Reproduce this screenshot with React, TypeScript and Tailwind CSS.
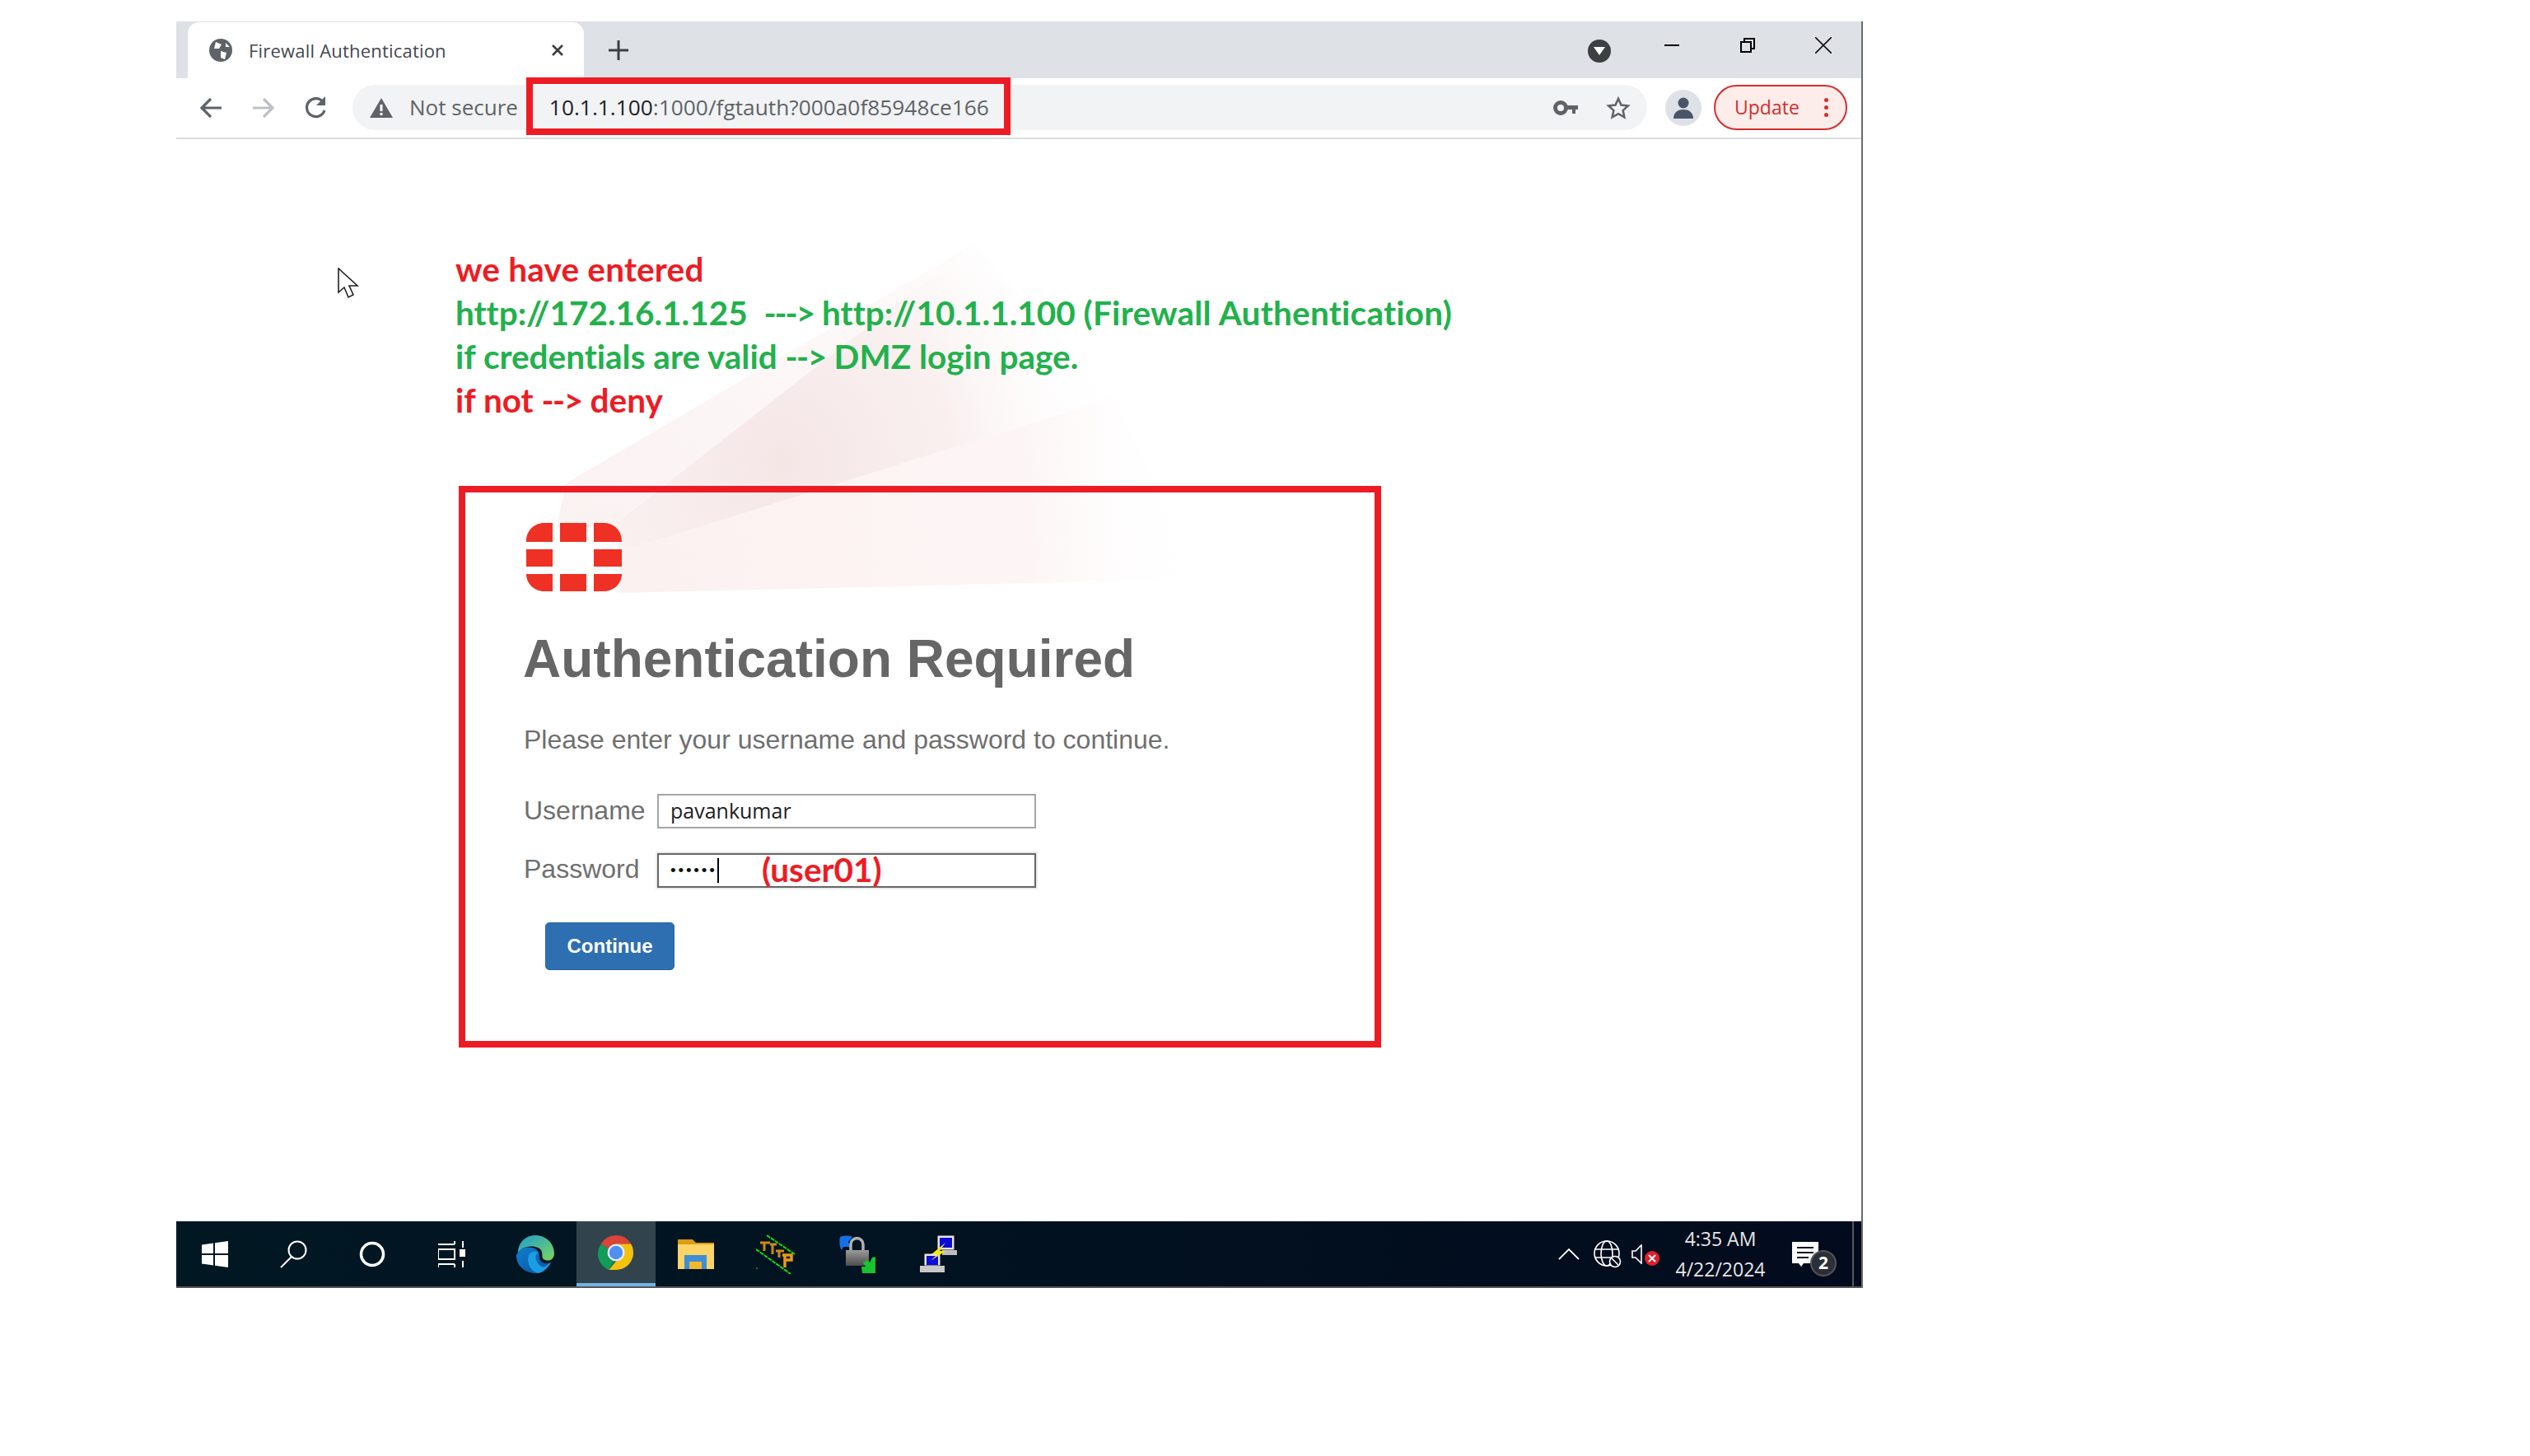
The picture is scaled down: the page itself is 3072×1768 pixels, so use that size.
const taskCells = [
  { w: "w-[94px]", icon: <WinIcon /> },
  { w: "w-[96px]", icon: <SearchIcon /> },
  { w: "w-[95px]", icon: <CortanaIcon /> },
  { w: "w-[100px]", icon: <TaskViewIcon /> },
  { w: "w-[101px]", icon: <EdgeIcon /> },
  { w: "w-[96px]", icon: <ChromeIcon />, active: true },
  { w: "w-[97px]", icon: <FolderIcon /> },
  { w: "w-[98px]", icon: <TcpIcon /> },
  { w: "w-[99px]", icon: <LockIcon /> },
  { w: "w-[100px]", icon: <NetIcon /> },
];

function WinIcon() {
  return (
    <svg width="34" height="34" viewBox="0 0 34 34" fill="#fff">
      <path d="M1 5.500 15 3.500V16H1ZM17 3.200 33 1V16H17ZM1 18H15V30.500L1 28.500ZM17 18H33V33L17 30.800Z" />
    </svg>
  );
}

function SearchIcon() {
  return (
    <svg width="34" height="34" viewBox="0 0 34 34" fill="none" stroke="#fff" strokeWidth="2">
      <circle cx="22" cy="12" r="10.500" />
      <path d="M15 20 2 33" />
    </svg>
  );
}

function CortanaIcon() {
  return (
    <svg width="32" height="32" viewBox="0 0 32 32" fill="none" stroke="#fff" strokeWidth="3.500">
      <circle cx="16" cy="16" r="13.500" />
    </svg>
  );
}

function TaskViewIcon() {
  return (
    <svg width="34" height="32" viewBox="0 0 34 32" fill="none" stroke="#fff" strokeWidth="2">
      <path d="M0 4H20M20 0V4M0 10H20V22H0ZM0 28H20M20 28V32M0 28V32M30 0V8M30 24V32" />
      <rect x="26" y="10" width="7" height="9" fill="#fff" stroke="none" />
    </svg>
  );
}

function EdgeIcon() {
  return (
    <svg width="48" height="48" viewBox="0 0 48 48">
      <defs>
        <linearGradient id="edgeTop" x1="0" y1="0" x2="1" y2="1">
          <stop offset="0" stopColor="#1f9bd1" />
          <stop offset="1" stopColor="#7bd85a" />
        </linearGradient>
        <linearGradient id="edgeLow" x1="0" y1="0" x2="1" y2="1">
          <stop offset="0" stopColor="#0f7fd0" />
          <stop offset="1" stopColor="#0b4f9c" />
        </linearGradient>
      </defs>
      <path d="M24 1C37 1 47 11 47 23C47 30 41 33 36 31C30 29 34 24 31 19C27 13 10 12 3 22C3 10 12 1 24 1Z" fill="url(#edgeTop)" />
      <path d="M3 22C8 13 26 13 29 24C28 30 31 35 38 35L43 34C38 43 31 47 24 47C12 47 1 38 1 26C1 25 2 23 3 22Z" fill="url(#edgeLow)" />
      <path d="M15 30C15 22 22 19 28 22C22 24 24 33 30 38C36 42 38 36 43 34C38 43 31 47 27 47C20 45 15 38 15 30Z" fill="#1b9de2" />
    </svg>
  );
}

function ChromeIcon() {
  return (
    <svg width="46" height="46" viewBox="0 0 48 48">
      <path d="M24 2A22 22 0 0 1 43 13H24A11 11 0 0 0 14 19L5 13A22 22 0 0 1 24 2Z" fill="#db4437" />
      <path d="M5 13 14 19 A11 11 0 0 0 22 35 L15 46 A22 22 0 0 1 5 13Z" fill="#0f9d58" />
      <path d="M43 13A22 22 0 0 1 24 46H15L24 35A11 11 0 0 0 33 19L24 13Z" fill="#f4c20d" />
      <circle cx="24" cy="24" r="11" fill="#e8eef7" />
      <circle cx="24" cy="24" r="8.500" fill="#4f8ff0" />
    </svg>
  );
}

function FolderIcon() {
  return (
    <svg width="44" height="36" viewBox="0 0 44 36">
      <path d="M0 0H18L22 4H44V8H0Z" fill="#dc9b10" />
      <rect x="0" y="6" width="44" height="30" fill="#fcd566" />
      <path d="M8 19H35V36H29V27H14V36H8Z" fill="#3f8fd6" />
      <rect x="14" y="27" width="15" height="9" fill="#f2b92e" />
    </svg>
  );
}

function TcpIcon() {
  return (
    <svg width="48" height="48" viewBox="0 0 48 48" fill="none">
      <path d="M13 1 47 24M0 18 42 48" stroke="#16d816" strokeWidth="2" strokeDasharray="5 1" />
      <path d="M5 10H17M10 10V20M17 12H25M20 12V24M24 20H34M28 20V28" stroke="#c98a18" strokeWidth="3" />
      <path d="M32 25H43V31H36M35 25V40" stroke="#e89a14" strokeWidth="3.500" />
      <rect x="0" y="40" width="2" height="2" fill="#0c7c10" />
    </svg>
  );
}

function LockIcon() {
  return (
    <svg width="46" height="46" viewBox="0 0 46 46">
      <defs>
        <linearGradient id="lockBody" x1="0" y1="0" x2="0" y2="1">
          <stop offset="0" stopColor="#9a9a9a" />
          <stop offset="1" stopColor="#4c4c4c" />
        </linearGradient>
      </defs>
      <path d="M2 2C6 0 13 0 17 2L12 8 15 14H6L4 18C1 14 1 7 2 2Z" fill="#1470e6" />
      <path d="M15 19V11A7 7 0 0 1 30 11V19" fill="none" stroke="#b0b0b0" strokeWidth="3.500" />
      <rect x="9" y="18" width="28" height="19" fill="url(#lockBody)" />
      <path d="M45 26V46H29L28 38 33 38 30 33 36 30 38 33 41 27Z" fill="#19c22e" />
    </svg>
  );
}

function NetIcon() {
  return (
    <svg width="46" height="46" viewBox="0 0 46 46">
      <rect x="21" y="0" width="21" height="18" fill="#e4e4e4" stroke="#111" />
      <rect x="24" y="3" width="15" height="12" fill="#0c0cd8" />
      <rect x="27" y="18" width="18" height="6" fill="#bdbdbd" />
      <rect x="5" y="22" width="20" height="15" fill="#e4e4e4" stroke="#111" />
      <rect x="8" y="25" width="14" height="11" fill="#0c0cd8" />
      <rect x="0" y="37" width="30" height="8" fill="#c8c8c8" />
      <path d="M31 9 14 23H21L13 31 31 19H24Z" fill="#f5e616" />
    </svg>
  );
}

function FortiLogo() {
  return (
    <svg width="116" height="83" viewBox="0 0 116 83" fill="#ee3124">
      <path d="M32 0V23H0V22C0 10 9 0 22 0ZM41 0H73V23H41ZM82 0H94C107 0 116 10 116 22V23H82ZM0 32H32V53H0ZM82 32H116V53H82ZM0 62H32V83H22C9 83 0 73 0 62ZM41 62H73V83H41ZM82 62H116C116 73 107 83 94 83H82Z" />
    </svg>
  );
}

// faint pink rays behind the login box
function Fan() {
  return (
    <svg className="absolute inset-0 pointer-events-none" width="2048" height="1314" viewBox="214 169 2048 1314">
      <defs>
        <linearGradient id="fanFaint" gradientUnits="userSpaceOnUse" x1="700" y1="620" x2="1170" y2="300">
          <stop offset="0" stopColor="#fbf2f2" />
          <stop offset="1" stopColor="#fefbfb" />
        </linearGradient>
        <radialGradient id="fanMid" gradientUnits="userSpaceOnUse" cx="950" cy="560" r="420">
          <stop offset="0" stopColor="#f5e6e6" />
          <stop offset="0.5" stopColor="#faf0f0" />
          <stop offset="1" stopColor="#ffffff" stopOpacity="0" />
        </radialGradient>
        <linearGradient id="fanLow" gradientUnits="userSpaceOnUse" x1="760" y1="700" x2="1460" y2="640">
          <stop offset="0" stopColor="#fcf1f1" />
          <stop offset="0.7" stopColor="#fdf5f5" />
          <stop offset="1" stopColor="#ffffff" stopOpacity="0" />
        </linearGradient>
      </defs>
      <path d="M1181 297 687 587 676 640 742 640Z" fill="url(#fanFaint)" />
      <path d="M742 640 1181 297 1351 483 753 670Z" fill="url(#fanMid)" />
      <path d="M753 670 1351 483 1460 703 753 720Z" fill="url(#fanLow)" />
    </svg>
  );
}

export default function App() {
  return (
    <div className="min-h-[1768px] bg-white pt-[26px] pl-[214px] font-['Liberation_Sans',sans-serif]">
      <div className="w-[2048px] h-[1538px] flex flex-col border-r-2 border-[#6b6b6b]">
        {/* tab strip */}
        <div className="h-[69px] bg-[#dee1e6] flex items-center pl-[14px] shrink-0">
          <div className="w-[481px] h-full mt-px bg-white rounded-t-[14px] flex items-center pl-[26px] pr-[24px] font-['Open_Sans',sans-serif] text-[22px] text-[#45494e]">
            <svg width="28" height="28" viewBox="0 0 28 28" className="mr-[20px]">
              <circle cx="14" cy="14" r="14" fill="#5f6368" />
              <path d="M8 4 15 7 12 12 6 12ZM14 15 21 17 19 25 14 23Z M20 5 25 10 20 10Z" fill="#fff" />
            </svg>
            <span className="tracking-[0.2px]">Firewall Authentication</span>
            <svg className="ml-auto" width="16" height="16" viewBox="0 0 16 16" stroke="#3c4043" strokeWidth="2.600">
              <path d="M2 2 14 14M14 2 2 14" />
            </svg>
          </div>
          <svg className="ml-[30px]" width="24" height="24" viewBox="0 0 24 24" stroke="#3c4043" strokeWidth="3">
            <path d="M12 0V24M0 12H24" />
          </svg>
          <div className="ml-auto w-[28px] h-[28px] mt-[2px] rounded-full bg-[#3c4043] flex items-center justify-center">
            <div className="w-0 h-0 border-x-[7px] border-x-transparent border-t-[10px] border-t-white" />
          </div>
          <div className="w-[18px] h-[2px] bg-black ml-[65px] mb-[12px]" />
          <svg className="ml-[74px] mb-[12px]" width="18" height="18" viewBox="0 0 18 18" fill="none" stroke="#000" strokeWidth="2">
            <path d="M1 5H13V17H1ZM5 5V1H17V13H13" />
          </svg>
          <svg className="ml-[73px] mb-[12px] mr-[36px]" width="20" height="20" viewBox="0 0 20 20" stroke="#111" strokeWidth="1.600">
            <path d="M0 0 20 20M20 0 0 20" />
          </svg>
        </div>

        {/* toolbar */}
        <div className="h-[74px] shrink-0 flex items-start pt-[8px] border-b-2 border-[#dadce0] bg-white">
          <div className="w-[214px] h-[55px] flex items-center pl-[28px] gap-[36px]">
            <svg width="28" height="26" viewBox="0 0 28 26" fill="none" stroke="#5f6368" strokeWidth="3.200">
              <path d="M27 13H3M14 2 3 13 14 24" />
            </svg>
            <svg width="28" height="26" viewBox="0 0 28 26" fill="none" stroke="#bdc1c6" strokeWidth="3.200">
              <path d="M1 13H25M14 2 25 13 14 24" />
            </svg>
            <svg width="26" height="28" viewBox="0 0 26 28" fill="none" stroke="#5f6368" strokeWidth="3.200">
              <path d="M23 8A11 11 0 1 0 24 17" />
              <path d="M25 0V11H14Z" fill="#5f6368" stroke="none" />
            </svg>
          </div>
          <div className="w-[1572px] h-[55px] rounded-full bg-[#f1f3f4] flex items-center pl-[21px] pr-[20px] font-['Open_Sans',sans-serif] relative">
            <svg width="28" height="24" viewBox="0 0 28 24">
              <path d="M14 0 28 24H0Z" fill="#5f6368" />
              <rect x="12.500" y="8" width="3" height="8" fill="#fff" />
              <rect x="12.500" y="18" width="3" height="3" fill="#fff" />
            </svg>
            <span className="ml-[20px] text-[26px] text-[#5f6368]">Not secure</span>
            <span className="ml-[38px] text-[26.300px] text-[#5f6368]">
              <span className="text-[#202124]">10.1.1.100</span>:1000/fgtauth?000a0f85948ce166
            </span>
            <svg className="ml-auto" width="30" height="18" viewBox="0 0 30 18" fill="#5f6368">
              <path d="M9 0A9 9 0 1 1 9 18A9 9 0 0 1 9 0ZM9 5A4 4 0 1 0 9 13A4 4 0 0 0 9 5ZM16 6H30V11H27V16H23V11H16Z" />
            </svg>
            <svg className="ml-[34px]" width="30" height="30" viewBox="0 0 24 24" fill="none" stroke="#5f6368" strokeWidth="2">
              <path d="M12 3 14.800 9.200 21.500 10 16.500 14.500 17.900 21 12 17.700 6.100 21 7.500 14.500 2.500 10 9.200 9.200Z" />
            </svg>
            {/* red annotation box round the address */}
            <div className="absolute left-[211px] top-[-9px] w-[588px] h-[70px] border-[8px] border-[#ed1c24]" />
          </div>
          <div className="ml-[22px] mt-[6px] w-[44px] h-[44px] rounded-full bg-[#dee1e6] flex items-center justify-center">
            <svg width="24" height="26" viewBox="0 0 24 26" fill="#4a5568">
              <circle cx="12" cy="7" r="6.500" />
              <path d="M0 26C0 18 6 15 12 15S24 18 24 26Z" />
            </svg>
          </div>
          <div className="ml-[15px] w-[162px] h-[55px] rounded-full border-2 border-[#d32f2f] bg-[#fcecea] flex items-center pl-[23px] font-['Open_Sans',sans-serif] text-[23px] text-[#d32f2f]">
            <span>Update</span>
            <div className="ml-[30px] flex flex-col gap-[4px]">
              <div className="w-[5px] h-[5px] rounded-full bg-[#d32f2f]" />
              <div className="w-[5px] h-[5px] rounded-full bg-[#d32f2f]" />
              <div className="w-[5px] h-[5px] rounded-full bg-[#d32f2f]" />
            </div>
          </div>
        </div>

        {/* page */}
        <div className="relative flex-1 bg-white">
          <Fan />
          <svg className="absolute left-[196px] top-[156px]" width="26" height="38" viewBox="0 0 26 38" fill="#fff" stroke="#222" strokeWidth="1.600">
            <path d="M1 1V30L8 24 13 36 19 33 14 22H24Z" />
          </svg>

          <div className="relative pt-[131px] pl-[339px] font-['Lato',sans-serif] font-bold text-[40.500px] leading-[53px] text-[#22b14c] [font-variant-ligatures:none]">
            <p className="text-[#ed1c24] tracking-[0.2px]">we have entered</p>
            <p className="whitespace-pre">
              http://172.16.1.125  <span className="tracking-[-2px]">---&gt;</span> http://10.1.1.100 <span className="tracking-[0.25px]">(Firewall Authentication)</span>
            </p>
            <p>if credentials are valid <span className="tracking-[-1.500px]">--&gt;</span> DMZ login page.</p>
            <p className="text-[#ed1c24]">if not <span className="tracking-[-1.500px]">--&gt;</span> deny</p>
          </div>

          <div className="relative ml-[343px] mt-[78px] w-[1120px] h-[682px] border-[8px] border-[#ed1c24] pt-[37px] pl-[74px] text-[#666]">
            <FortiLogo />
            <h1 className="-ml-[4px] mt-[44px] text-[64px] leading-[76px] font-bold whitespace-nowrap">Authentication Required</h1>
            <p className="-ml-[3px] mt-[40px] text-[32px] leading-[40px] text-[#6f6f6f] whitespace-nowrap">Please enter your username and password to continue.</p>
            <div className="mt-[46px] -ml-[3px] flex items-center h-[42px]">
              <span className="w-[162px] mb-[3px] text-[32px] text-[#6f6f6f]">Username</span>
              <div className="w-[460px] h-[42px] border-2 border-[#a6a6a6] flex items-center pl-[14px] font-['Open_Sans',sans-serif] text-[25px] text-[#202124]">pavankumar</div>
            </div>
            <div className="mt-[30px] -ml-[3px] flex items-center h-[42px]">
              <span className="w-[162px] mb-[4px] text-[32px] text-[#6f6f6f]">Password</span>
              <div className="relative w-[460px] h-[42px] border-2 border-[#666] shadow-[0_0_0_2px_#ececec] flex items-center pl-[14px] text-[#111]">
                <span className="text-[19px] tracking-[2.800px]">••••••</span>
                <div className="w-[2px] h-[30px] bg-black" />
                <span className="absolute left-[125px] top-[-7px] font-['Lato',sans-serif] font-bold text-[40.500px] leading-[50px] text-[#ed1c24] [font-variant-ligatures:none]">(user01)</span>
              </div>
            </div>
            <button className="block mt-[42px] ml-[23px] w-[157px] h-[58px] rounded-[5px] bg-[#2e6fb1] border border-[#2a64a5] text-white text-[24px] font-bold">Continue</button>
          </div>
        </div>

        {/* taskbar */}
        <div className="h-[81px] shrink-0 flex bg-gradient-to-r from-[#011823] to-[#020b1d] text-white border-b-2 border-[#555]">
          {taskCells.map((c, i) => (
            <div key={i} className={`${c.w} flex items-center justify-center ${c.active ? "bg-[#31444e] border-b-4 border-[#6fb2e8]" : ""}`}>
              {c.icon}
            </div>
          ))}
          <div className="ml-auto flex items-center pr-[9px] font-['Open_Sans',sans-serif]">
            <div className="w-[48px] flex justify-center">
              <svg width="26" height="14" viewBox="0 0 26 14" fill="none" stroke="#fff" strokeWidth="1.800">
                <path d="M1 13 13 1 25 13" />
              </svg>
            </div>
            <div className="w-[46px] flex justify-center relative">
              <svg width="34" height="34" viewBox="0 0 34 34" fill="none" stroke="#fff" strokeWidth="1.600">
                <circle cx="16" cy="16" r="15" />
                <ellipse cx="16" cy="16" rx="7" ry="15" />
                <path d="M1 11H31M1 21H31" />
                <circle cx="26" cy="26" r="6.500" fill="#071020" />
                <path d="M22 22 30 30" />
              </svg>
            </div>
            <div className="w-[48px] pl-[6px] flex items-center relative h-[40px]">
              <svg width="14" height="24" viewBox="0 0 14 24" fill="none" stroke="#fff" strokeWidth="1.600">
                <path d="M12 1V23L5 16H1V8H5Z" />
              </svg>
              <div className="absolute left-[22px] top-[16px] w-[18px] h-[18px] rounded-full bg-[#e01f2d] flex items-center justify-center">
                <svg width="10" height="10" viewBox="0 0 10 10" stroke="#fff" strokeWidth="2">
                  <path d="M1 1 9 9M9 1 1 9" />
                </svg>
              </div>
            </div>
            <div className="w-[132px] flex flex-col items-center text-[23px] leading-[37px] text-[#e6e6e6]">
              <span>4:35 AM</span>
              <span>4/22/2024</span>
            </div>
            <div className="w-[74px] flex justify-center relative h-[50px] items-center">
              <svg width="32" height="30" viewBox="0 0 32 30" className="-ml-[1px]">
                <path d="M0 0H32V26H14L11 30 8 26H0Z" fill="#fff" />
                <path d="M6 7H26M6 13H26M6 19H20" stroke="#071020" strokeWidth="2" />
              </svg>
              <div className="absolute left-[43px] top-[20px] w-[32px] h-[32px] rounded-full bg-[#2b2f38] border-2 border-[#555] flex items-center justify-center text-[21px] font-bold">2</div>
            </div>
            <div className="ml-[20px] w-[2px] h-full bg-[#555]" />
          </div>
        </div>
      </div>
    </div>
  );
}
